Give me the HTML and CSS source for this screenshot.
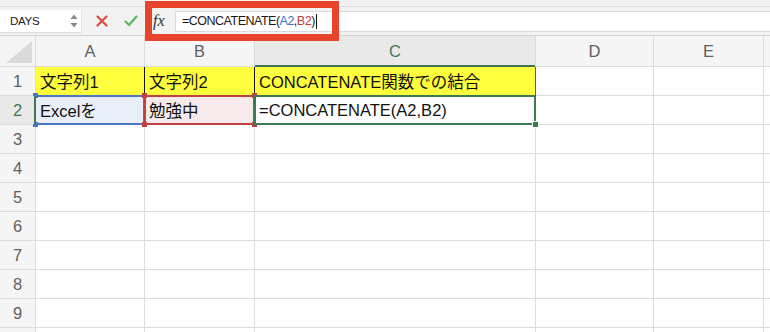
FILE: index.html
```html
<!DOCTYPE html>
<html lang="ja">
<head>
  <meta charset="UTF-8" />
  <meta name="viewport" content="width=device-width, initial-scale=1.0"/>
  <title>CONCATENATE</title>
  <link rel="stylesheet" href="styles.css">
</head>
<body>
  <div class="ribbon-edge"></div>
  <header class="toolbar">
    <div class="namebox">
      <span class="name">DAYS</span>
      <svg class="spin" width="8" height="14" viewBox="0 0 8 14">
        <path d="M4 0.5 L7.5 5 L0.5 5 Z" fill="#8a8a8a"/>
        <path d="M4 13.5 L7.5 9 L0.5 9 Z" fill="#8a8a8a"/>
      </svg>
    </div>
    <div class="actions">
      <svg width="12" height="12" viewBox="0 0 12 12">
        <path d="M1.5 1.5 L10.5 10.5 M10.5 1.5 L1.5 10.5" stroke="#dd4b45" stroke-width="2.2" stroke-linecap="round"/>
      </svg>
      <svg width="14" height="12" viewBox="0 0 14 12">
        <path d="M1.5 6.5 L5 10 L12.5 1.5" fill="none" stroke="#5cb85c" stroke-width="2.2" stroke-linecap="round" stroke-linejoin="round"/>
      </svg>
    </div>
    <div class="fx">fx</div>
    <div class="formula">=CONCATENATE(<span class="ref-a-text">A2</span>,<span class="ref-b-text">B2</span>)<span class="caret"></span></div>
  </header>

  <!-- annotation box drawn over the formula bar -->
  <div class="callout"></div>

  <div class="sheet">
    <div class="hd corner"><span class="tri"></span></div>
    <div class="hd">A</div>
    <div class="hd">B</div>
    <div class="hd hd-sel">C</div>
    <div class="hd">D</div>
    <div class="hd">E</div>
    <div class="hd"></div>

    <div class="rh">1</div>
    <div class="c yellow edge">文字列1</div>
    <div class="c yellow edge">文字列2</div>
    <div class="c yellow c1">CONCATENATE関数での結合</div>
    <div class="c"></div>
    <div class="c"></div>
    <div class="c"></div>

    <div class="rh rh-sel">2</div>
    <div class="c ref-a">Excelを<i class="h tl"></i><i class="h bl"></i></div>
    <div class="c ref-b">勉強中<i class="h tl"></i><i class="h tr"></i><i class="h bl"></i><i class="h br"></i></div>
    <div class="c active">=CONCATENATE(A2,B2)<i class="fill-handle"></i></div>
    <div class="c"></div>
    <div class="c"></div>
    <div class="c"></div>

    <div class="rh">3</div><div class="c"></div><div class="c"></div><div class="c"></div><div class="c"></div><div class="c"></div><div class="c"></div>
    <div class="rh">4</div><div class="c"></div><div class="c"></div><div class="c"></div><div class="c"></div><div class="c"></div><div class="c"></div>
    <div class="rh">5</div><div class="c"></div><div class="c"></div><div class="c"></div><div class="c"></div><div class="c"></div><div class="c"></div>
    <div class="rh">6</div><div class="c"></div><div class="c"></div><div class="c"></div><div class="c"></div><div class="c"></div><div class="c"></div>
    <div class="rh">7</div><div class="c"></div><div class="c"></div><div class="c"></div><div class="c"></div><div class="c"></div><div class="c"></div>
    <div class="rh">8</div><div class="c"></div><div class="c"></div><div class="c"></div><div class="c"></div><div class="c"></div><div class="c"></div>
    <div class="rh">9</div><div class="c"></div><div class="c"></div><div class="c"></div><div class="c"></div><div class="c"></div><div class="c"></div>
    <div class="rh"></div><div class="c"></div><div class="c"></div><div class="c"></div><div class="c"></div><div class="c"></div><div class="c"></div>
  </div>
</body>
</html>
```

FILE: styles.css
```css
:root {
  --grid: #dcdcdc;
  --head-bg: #f5f5f5;
  --bar-bg: #f2f2f2;
  --green: #3b7a53;
  --blue: #4a76c9;
  --red: #c0413f;
  --yellow: #ffff3d;
}
html, body { height: 100%; }
body {
  margin: 0; overflow: hidden; background: #fff; color: #111;
  font-family: "Liberation Sans", "Noto Sans CJK JP", sans-serif;
  position: relative;
}

.ribbon-edge { height: 6px; background: var(--bar-bg); border-bottom: 1px solid #dedede; }
.toolbar {
  height: 28px; background: var(--bar-bg); border-bottom: 1px solid #d4d4d4;
  display: flex; align-items: center;
}
.namebox {
  width: 82px; height: 23px; box-sizing: border-box; background: #fff;
  border-bottom: 1px solid #dedede; border-right: 1px solid #e2e2e2;
  display: flex; align-items: center; justify-content: space-between;
  padding: 0 3px 0 10px;
}
.namebox .name { font-size: 11.5px; letter-spacing: -0.3px; color: #222; }
.actions {
  width: 63px; display: flex; align-items: center; gap: 16px; padding-left: 14px; box-sizing: border-box;
}
.fx {
  width: 30px; box-sizing: border-box; padding-left: 8px;
  font-family: "Liberation Serif", serif; font-style: italic; font-size: 16px; color: #333;
}
.formula {
  flex: 1; height: 21px; box-sizing: border-box; background: #fff;
  border: 1px solid #d9d9d9; border-right: none;
  display: flex; align-items: center; padding-left: 6px;
  font-size: 12.5px; letter-spacing: -0.5px; color: #1a1a1a;
}
.ref-a-text { color: #3b6fd0; }
.ref-b-text { color: #c33a3a; }
.caret { display: inline-block; width: 1px; height: 15px; background: #111; margin-left: 1px; }

.callout {
  position: absolute; left: 145px; top: 1px; width: 194px; height: 40px;
  box-sizing: border-box; border: 7px solid #e8432b;
}

.sheet {
  display: grid; gap: 1px; background: var(--grid);
  grid-template-columns: 35px 108px 109px 280px 117px 109px 1fr;
  grid-template-rows: 30px repeat(10, 28px);
}
.hd, .rh {
  background: var(--head-bg); color: #5f5f5f; font-size: 16.5px;
  display: flex; align-items: center; justify-content: center;
}
.corner { position: relative; }
.tri {
  position: absolute; right: 3px; bottom: 3px; width: 0; height: 0;
  border-left: 26px solid transparent; border-bottom: 22px solid #dadada;
}
.hd-sel {
  background: #e9e9e9; color: var(--green);
  box-shadow: inset 0 -1px 0 var(--green), 0 1px 0 var(--green);
}
.rh-sel {
  background: #e9e9e9; color: var(--green);
  box-shadow: inset -1px 0 0 var(--green), 1px 0 0 var(--green);
  position: relative; z-index: 2;
}

.c {
  background: #fff; font-size: 16.5px; padding-left: 4px;
  display: flex; align-items: center; white-space: nowrap; position: relative;
}
.yellow { background: var(--yellow); }
.edge { box-shadow: 1px 0 0 #111; }
.c1 { box-shadow: 1px 0 0 #3f6a4c, 0 -1px 0 #3f6a4c; z-index: 1; }

.ref-a { background: #e9eef8; }
.ref-a::after {
  content: ''; position: absolute; top: -1px; bottom: -1px; left: 0; right: -1px;
  border: 2px solid var(--blue); border-left: none;
}
.ref-a .h { background: var(--blue); }
.ref-b { background: #f6eaea; z-index: 1; }
.ref-b::after {
  content: ''; position: absolute; inset: -1px; border: 2px solid var(--red);
}
.ref-b .h { background: var(--red); }
.h {
  position: absolute; width: 5px; height: 5px; z-index: 1;
}
.h.tl { left: -3px; top: -3px; }
.h.tr { right: -3px; top: -3px; }
.h.bl { left: -3px; bottom: -3px; }
.h.br { right: -3px; bottom: -3px; }

.active { z-index: 1; }
.active::after {
  content: ''; position: absolute; inset: -1px; border: 2px solid var(--green);
}
.fill-handle {
  position: absolute; right: -4px; bottom: -4px; width: 5px; height: 5px;
  background: var(--green); border: 1px solid #fff; z-index: 2;
}
```
